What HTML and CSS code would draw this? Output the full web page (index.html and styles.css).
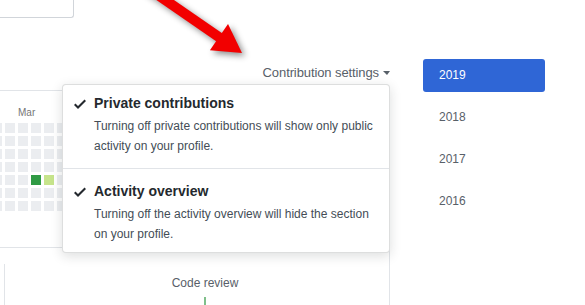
FILE: index.html
```html
<!DOCTYPE html>
<html lang="en">
<head>
<meta charset="UTF-8">
<meta name="viewport" content="width=device-width, initial-scale=1.0">
<title>Contribution settings</title>
<link rel="stylesheet" href="styles.css">
</head>
<body>
  <div class="page">
    <div class="main">
      <div class="searchBox"></div>

      <div class="settingsRow">
        <span class="settingsToggle">Contribution settings<span class="caret"></span></span>

        <div class="settingsMenu">
          <div class="menuItem">
            <svg class="check" viewBox="0 0 12 16" width="12" height="16"><path d="M12 5l-8 8-4-4 1.5-1.5L4 10l6.5-6.5L12 5z"/></svg>
            <div>
              <div class="menuTitle">Private contributions</div>
              <div class="menuDesc">Turning off private contributions will show only public activity on your profile.</div>
            </div>
          </div>
          <div class="menuItem">
            <svg class="check" viewBox="0 0 12 16" width="12" height="16"><path d="M12 5l-8 8-4-4 1.5-1.5L4 10l6.5-6.5L12 5z"/></svg>
            <div>
              <div class="menuTitle">Activity overview</div>
              <div class="menuDesc">Turning off the activity overview will hide the section on your profile.</div>
            </div>
          </div>
        </div>
      </div>

      <div class="graphBox">
        <div class="monthLabel">Mar</div>
        <div class="cells" id="cells"></div>
      </div>

      <div class="activity">
        <div class="activityCol">
          <div class="axisLabel">Code review</div>
          <div class="axisTick"></div>
        </div>
      </div>
    </div>

    <ul class="yearList">
      <li class="year selected">2019</li>
      <li class="year">2018</li>
      <li class="year">2017</li>
      <li class="year">2016</li>
    </ul>
  </div>

  <svg class="arrow" width="130" height="75" viewBox="0 0 130 75">
    <g transform="translate(102,53) rotate(34.6)">
      <rect x="-130" y="-5" width="106" height="10"/>
      <polygon points="0,0 -28,-16 -28,16"/>
    </g>
  </svg>

  <script>
    // Build the contribution calendar, one column per week
    const cells = document.getElementById('cells');
    const levels = { '3-4': 'level4', '4-4': 'level1' };

    for (let week = 0; week < 30; week++) {
      for (let day = 0; day < 7; day++) {
        const cell = document.createElement('div');
        cell.classList.add('cell');
        const level = levels[week + '-' + day];
        if (level) {
          cell.classList.add(level);
        }
        cells.appendChild(cell);
      }
    }
  </script>
</body>
</html>
```

FILE: styles.css
```css
body {
  margin: 0;
  background-color: #fff;
  font-family: "Liberation Sans", Arial, sans-serif;
  color: #24292e;
}

.page {
  display: flex;
  align-items: flex-start;
}

/* Left column, pushed a little off the left edge */
.main {
  width: 400px;
  margin-left: -10px;
  flex-shrink: 0;
}

.searchBox {
  width: 84px;
  height: 18px;
  box-sizing: border-box;
  border: 1px solid #d1d5da;
  border-top: none;
  border-radius: 0 0 3px 3px;
}

/* Contribution settings toggle and its dropdown */
.settingsRow {
  position: relative;
  display: flex;
  justify-content: flex-end;
  margin-top: 46px;
  height: 17px;
  line-height: 17px;
  font-size: 13px;
  color: #586069;
}

.settingsToggle {
  display: flex;
  align-items: center;
  letter-spacing: -0.1px;
}

.caret {
  width: 0;
  height: 0;
  margin-left: 4px;
  border-top: 4px solid #586069;
  border-left: 4px solid transparent;
  border-right: 3px solid transparent;
}

.settingsMenu {
  position: absolute;
  top: 20px;
  right: 0;
  width: 328px;
  box-sizing: border-box;
  background-color: #fff;
  border: 1px solid rgba(27, 31, 35, 0.15);
  border-radius: 4px;
  box-shadow: 0 3px 12px rgba(27, 31, 35, 0.15);
  z-index: 2;
}

.menuItem {
  display: flex;
  align-items: flex-start;
  padding: 12px 16px 12px 11px;
}

.menuItem:first-child {
  padding-top: 8px;
}

.menuItem:last-child {
  padding-bottom: 8px;
}

.menuItem + .menuItem {
  border-top: 1px solid #e1e4e8;
}

.check {
  flex-shrink: 0;
  margin-top: 3px;
  margin-right: 8px;
  fill: #24292e;
}

.menuTitle {
  font-size: 14px;
  font-weight: bold;
  line-height: 20px;
  color: #24292e;
}

.menuDesc {
  margin-top: 3px;
  font-size: 12px;
  line-height: 20px;
  color: #444d56;
}

/* Contribution calendar */
.graphBox {
  height: 158px;
  margin-top: 9px;
  box-sizing: border-box;
  padding: 15px 0 0 1px;
  border: 1px solid #e1e4e8;
  border-radius: 3px;
  overflow: hidden;
}

.monthLabel {
  margin-left: 26px;
  margin-bottom: 4px;
  font-size: 10px;
  line-height: 13px;
  color: #767676;
}

.cells {
  display: grid;
  grid-auto-flow: column;
  grid-template-rows: repeat(7, 10px);
  grid-auto-columns: 10px;
  gap: 3px;
}

.cell {
  background-color: #ebedf0;
}

.cell.level1 {
  background-color: #c6e48b;
}

.cell.level4 {
  background-color: #2f9a44;
}

/* Activity overview */
.activity {
  border-right: 1px solid #e1e4e8;
  padding-top: 16px;
}

.activityCol {
  margin-left: 14px;
  height: 41px;
  padding-left: 16px;
  border-left: 1px solid #e1e4e8;
  text-align: center;
  overflow: hidden;
}

.axisLabel {
  padding-top: 10px;
  font-size: 12px;
  line-height: 18px;
  color: #586069;
}

.axisTick {
  width: 2px;
  height: 8px;
  margin: 5px auto 0;
  background-color: #7fbf8a;
}

/* Year navigation */
.yearList {
  list-style: none;
  margin: 0 0 0 33px;
  padding: 59px 0 0;
  width: 122px;
}

.year {
  height: 33px;
  line-height: 33px;
  margin-bottom: 9px;
  padding-left: 16px;
  border-radius: 3px;
  font-size: 12px;
  color: #586069;
}

.year:last-child {
  margin-bottom: 0;
}

.year.selected {
  background-color: #2f66d6;
  color: #fff;
}

/* Red annotation arrow over the page */
.arrow {
  position: absolute;
  left: 140px;
  top: 0;
  overflow: visible;
  fill: #f20000;
  filter: drop-shadow(3px 3px 3px rgba(0, 0, 0, 0.45));
  pointer-events: none;
}
```
